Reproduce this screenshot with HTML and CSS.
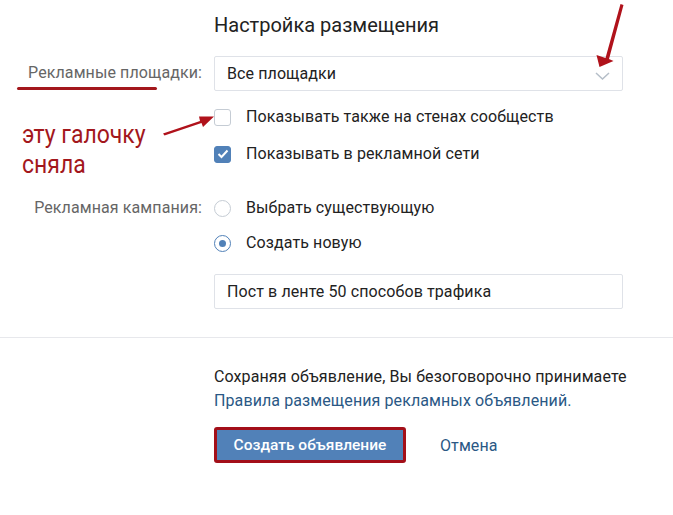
FILE: index.html
```html
<!DOCTYPE html>
<html lang="ru">
<head>
<meta charset="utf-8">
<link rel="stylesheet" href="styles.css">
</head>
<body>
<div class="page">
  <form class="form">
    <div class="grid">
      <div></div>
      <h1 class="title">Настройка размещения</h1>

      <div class="label label-first">Рекламные площадки:</div>
      <div class="select">
        <span>Все площадки</span>
        <svg class="chev" width="15" height="8" viewBox="0 0 15 8"><path d="M1 1l6.5 6 6.5-6" fill="none" stroke="#b5bec8" stroke-width="1.5"/></svg>
      </div>

      <div></div>
      <div class="checks">
        <label class="opt"><span class="cb"></span>Показывать также на стенах сообществ</label>
        <label class="opt"><span class="cb on"><svg width="12" height="10" viewBox="0 0 12 10"><path d="M1.5 5l3 3 6-6.5" fill="none" stroke="#fff" stroke-width="2"/></svg></span>Показывать в рекламной сети</label>
      </div>

      <div class="label label-camp">Рекламная кампания:</div>
      <div class="radios">
        <label class="opt"><span class="rb"></span>Выбрать существующую</label>
        <label class="opt"><span class="rb on"></span>Создать новую</label>
        <div class="input">Пост в ленте 50 способов трафика</div>
      </div>
    </div>

    <div class="divider"></div>

    <div class="grid">
      <div></div>
      <div class="footer">
        <p class="terms">Сохраняя объявление, Вы безоговорочно принимаете<br><a class="link">Правила размещения рекламных объявлений.</a></p>
        <div class="actions">
          <button type="button" class="btn">Создать объявление</button>
          <a class="cancel">Отмена</a>
        </div>
      </div>
    </div>
  </form>

  <div class="note">эту галочку<br>сняла</div>
  <div class="underline"></div>
  <svg class="arrows" width="673" height="515" viewBox="0 0 673 515">
    <g fill="#b0121b" stroke="none">
      <path d="M163 133.5 L200 121 L199 116.5 L214 116.5 L203 127 L201.5 123 L164.5 135.5 Z"/>
      <path d="M620.5 4 L623.5 5 L609 59 L613.5 61 L599.5 67 L596.5 55 L605.5 58 Z"/>
    </g>
  </svg>
</div>
</body>
</html>
```
FILE: styles.css
```css
* { box-sizing: border-box; }
html, body { margin: 0; padding: 0; background: #fff; }
body {
  font-family: Roboto, "Noto Sans", "Liberation Sans", sans-serif;
  font-size: 16px;
  letter-spacing: 0.1px;
  color: #222;
}
.page { position: relative; width: 673px; height: 515px; overflow: hidden; }
.form { padding-top: 13px; }
.grid {
  display: grid;
  grid-template-columns: 202px 409px;
  column-gap: 12px;
}
.title {
  margin: 0 0 19px;
  font-size: 20px;
  font-weight: 400;
  line-height: 24px;
  letter-spacing: 0;
  color: #222;
}
.label {
  color: #666;
  text-align: right;
  line-height: 34px;
}
.label-camp { line-height: 18px; }
.select, .input {
  height: 35px;
  border: 1px solid #dfe2e8;
  border-radius: 2px;
  padding: 0 12px;
  display: flex;
  align-items: center;
  justify-content: space-between;
  color: #222;
}
.chev { margin-right: 0; margin-top: 4px; }
.checks {
  display: flex;
  flex-direction: column;
  gap: 19px;
  padding-top: 17px;
  padding-bottom: 36px;
}
.radios {
  display: flex;
  flex-direction: column;
  gap: 17px;
}
.radios .input { margin-top: 5px; }
.opt {
  display: flex;
  align-items: center;
  height: 18px;
  line-height: 18px;
}
.cb {
  width: 17px;
  height: 17px;
  border: 1px solid #c5ccd4;
  border-radius: 3px;
  margin-right: 15px;
  display: flex;
  align-items: center;
  justify-content: center;
  flex: none;
}
.cb.on { background: #5181b8; border-color: #5181b8; }
.rb {
  width: 17px;
  height: 17px;
  border: 1px solid #c5ccd4;
  border-radius: 50%;
  margin-right: 15px;
  flex: none;
  position: relative;
}
.rb.on { border-color: #5181b8; }
.rb.on::after {
  content: "";
  position: absolute;
  left: 4px; top: 4px;
  width: 7px; height: 7px;
  border-radius: 50%;
  background: #5181b8;
}
.divider {
  height: 1px;
  background: #e7e8ec;
  margin-top: 28px;
}
.footer { padding-top: 27px; white-space: nowrap; }
.terms {
  margin: 0;
  line-height: 24px;
  color: #222;
}
.link, .cancel { color: #2a5885; text-decoration: none; }
.actions {
  display: flex;
  align-items: center;
  margin-top: 14px;
  gap: 34px;
}
.btn {
  width: 192px;
  height: 36px;
  background: #5181b8;
  color: #fff;
  border: 3px solid #a30f19;
  border-radius: 3px;
  font-family: inherit;
  font-size: 15.5px;
  font-weight: 500;
  padding: 0;
}
.note {
  position: absolute;
  left: 22px;
  top: 120px;
  color: #a3171c;
  font-family: Roboto, "Liberation Sans", sans-serif;
  font-size: 25px;
  line-height: 30px;
  letter-spacing: 0;
  transform: scaleX(0.92);
  transform-origin: left top;
}
.underline {
  position: absolute;
  left: 17px;
  top: 87px;
  width: 140px;
  height: 3px;
  border-radius: 2px;
  background: #a3171c;
}
.arrows { position: absolute; left: 0; top: 0; pointer-events: none; }
```
